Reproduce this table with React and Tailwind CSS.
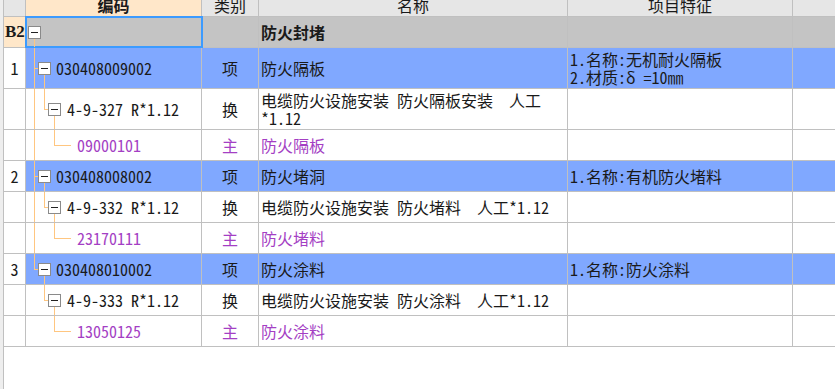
const LINE = 'absolute bg-[#ffc680]';

const rows = [
  { level: 0, idx: 'B2', name: '防火封堵', h: 'h-[31px]' },
  { level: 1, idx: '1', code: '030408009002', type: '项', name: '防火隔板', feat: ['1.名称:无机耐火隔板', '2.材质:δ =10㎜'], h: 'h-[41px]' },
  { level: 2, code: '4-9-327 R*1.12', type: '换', name: '电缆防火设施安装 防火隔板安装  人工*1.12', h: 'h-[41px]' },
  { level: 3, code: '09000101', type: '主', name: '防火隔板', h: 'h-[31px]' },
  { level: 1, idx: '2', code: '030408008002', type: '项', name: '防火堵洞', feat: ['1.名称:有机防火堵料'], h: 'h-[31px]' },
  { level: 2, code: '4-9-332 R*1.12', type: '换', name: '电缆防火设施安装 防火堵料  人工*1.12', h: 'h-[31px]' },
  { level: 3, code: '23170111', type: '主', name: '防火堵料', h: 'h-[31px]' },
  { level: 1, idx: '3', code: '030408010002', type: '项', name: '防火涂料', feat: ['1.名称:防火涂料'], h: 'h-[31px]', last: true },
  { level: 2, code: '4-9-333 R*1.12', type: '换', name: '电缆防火设施安装 防火涂料  人工*1.12', h: 'h-[31px]', after: true },
  { level: 3, code: '13050125', type: '主', name: '防火涂料', h: 'h-[31px]', after: true },
];

function Toggle() {
  return (
    <span className="relative z-10 flex h-[13px] w-[13px] shrink-0 items-center justify-center border border-[#8a8a8a] bg-white">
      <span className="h-px w-[7px] bg-[#222]" />
    </span>
  );
}

// tree connectors for the code column, drawn per cell
function Branches({ row }) {
  const { level, last, after } = row;
  return (
    <>
      {level === 0 && <span className={`${LINE} left-[8px] top-1/2 bottom-0 w-px`} />}
      {level > 0 && !after && (
        <span className={`${LINE} left-[8px] top-0 w-px ${last ? 'h-1/2' : 'bottom-0'}`} />
      )}
      {level === 1 && (
        <>
          <span className={`${LINE} left-[8px] top-1/2 h-px w-[5px]`} />
          <span className={`${LINE} left-[18px] top-1/2 bottom-0 w-px`} />
        </>
      )}
      {level === 2 && (
        <>
          <span className={`${LINE} left-[18px] top-0 h-1/2 w-px`} />
          <span className={`${LINE} left-[18px] top-1/2 h-px w-[5px]`} />
          <span className={`${LINE} left-[28px] top-1/2 bottom-0 w-px`} />
        </>
      )}
      {level === 3 && (
        <>
          <span className={`${LINE} left-[28px] top-0 h-1/2 w-px`} />
          <span className={`${LINE} left-[28px] top-1/2 h-px w-[17px]`} />
        </>
      )}
    </>
  );
}

function Row({ row }) {
  const group = row.level === 0;
  const item = row.level === 1;
  const purple = row.level === 3 ? 'text-[#a43fc4]' : 'text-[#1a1a1a]';
  const fill = group ? 'bg-[#c4c4c4]' : item ? 'bg-[#80a8ff]' : 'bg-white';
  const pad = ['pl-[2px]', 'pl-[12px]', 'pl-[22px]', 'pl-[51px]'][row.level];

  return (
    <div className={`flex border-b border-[#c0c0c0] ${row.h}`}>
      <div
        className={`flex w-[22px] shrink-0 items-center justify-center border-r border-[#c0c0c0] ${
          group ? 'bg-[#ffe7c9] font-bold font-["Liberation_Serif",serif] text-[17px] justify-start pl-px' : 'bg-white'
        }`}
      >
        {row.idx}
      </div>
      <div
        className={`relative flex w-[176px] shrink-0 items-center gap-[5px] border-r border-[#c0c0c0] ${fill} ${pad} ${purple} ${
          group ? 'outline-2 -outline-offset-1 outline-[#3c9bff] z-20' : ''
        }`}
      >
        <Branches row={row} />
        {row.level < 3 && <Toggle />}
        {row.level === 2 ? <span className="ml-px">{row.code}</span> : <span>{row.code}</span>}
      </div>
      <div className={`flex w-[57px] shrink-0 items-center justify-center border-r border-[#c0c0c0] ${fill} ${purple}`}>
        {row.type}
      </div>
      <div
        className={`flex w-[309px] shrink-0 items-center whitespace-pre-wrap border-r border-[#c0c0c0] pl-[2px] leading-[18px] ${fill} ${purple} ${
          group ? 'font-bold' : ''
        }`}
      >
        {row.name}
      </div>
      <div className={`flex w-[225px] shrink-0 flex-col justify-center border-r border-[#c0c0c0] pl-[2px] leading-[18px] ${fill}`}>
        {row.feat && row.feat.map((f) => <div key={f}>{f}</div>)}
      </div>
      <div className={`flex-1 ${fill}`} />
    </div>
  );
}

export default function App() {
  const head = 'flex items-end justify-center overflow-hidden border-r border-[#c0c0c0] pb-[3px] leading-none';
  return (
    <div className="flex h-[389px] w-[835px] overflow-hidden bg-white text-[16px] text-[#1a1a1a] font-['Noto_Sans_Mono_CJK_SC','Noto_Sans_CJK_SC',monospace]">
      <div className="w-[3px] shrink-0 bg-[#eeeeee]" />
      <div className="flex min-w-0 flex-1 flex-col border-l border-[#c0c0c0]">
        <div className="flex h-[17px] border-b border-[#c0c0c0] bg-[#e6e6e6]">
          <div className={`${head} w-[22px] shrink-0`} />
          <div className={`${head} w-[176px] shrink-0 bg-[#ffe7c9] font-bold`}>编码</div>
          <div className={`${head} w-[57px] shrink-0`}>类别</div>
          <div className={`${head} w-[309px] shrink-0`}>名称</div>
          <div className={`${head} w-[225px] shrink-0`}>项目特征</div>
          <div className="flex-1" />
        </div>
        {rows.map((r, i) => (
          <Row key={i} row={r} />
        ))}
      </div>
    </div>
  );
}
